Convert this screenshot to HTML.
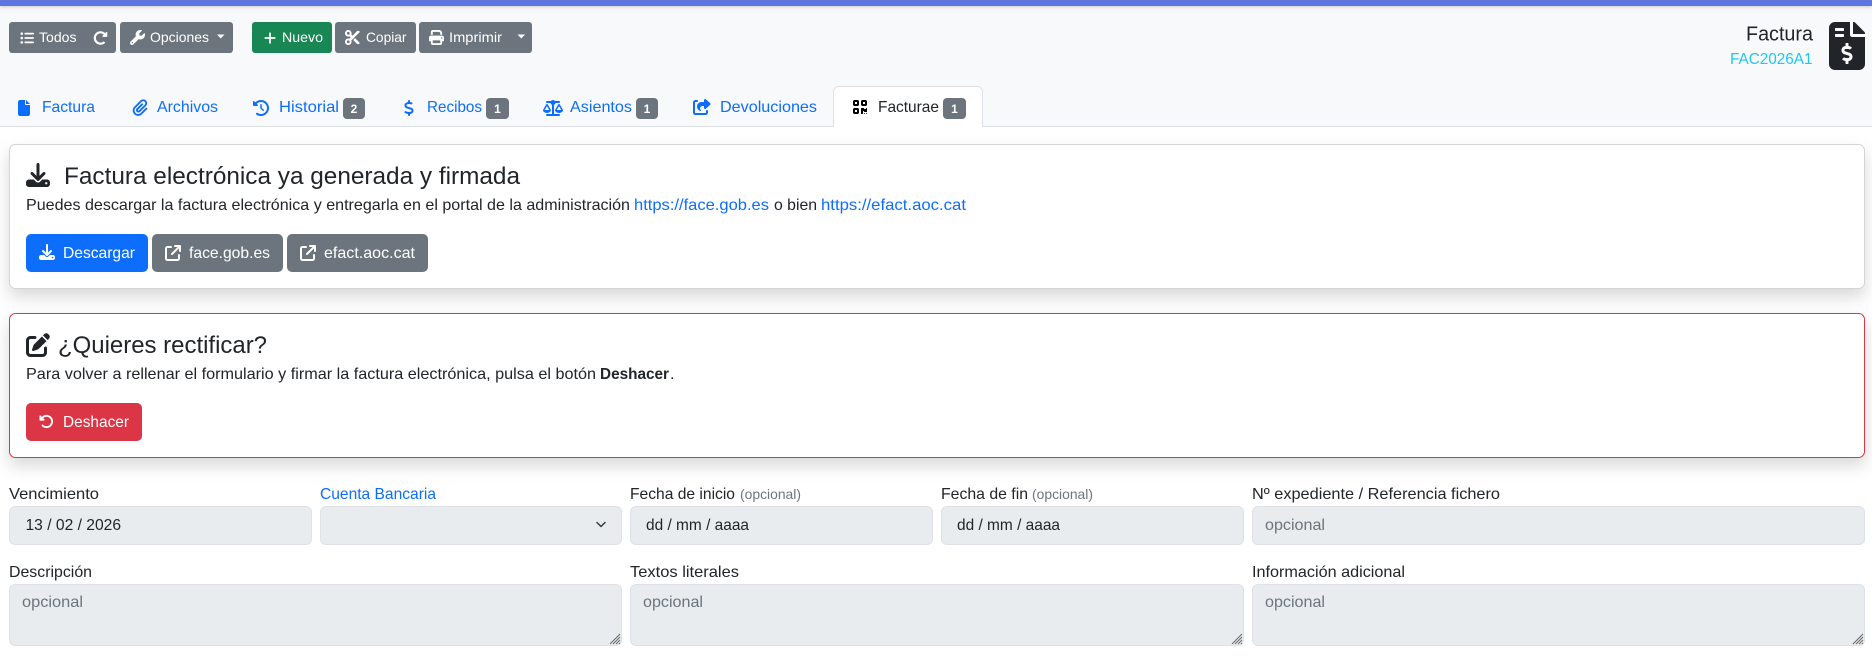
<!DOCTYPE html>
<html lang="es"><head><meta charset="utf-8"><title>Factura</title>
<style>
html,body{margin:0;padding:0;background:#fff;width:1872px;height:659px;overflow:hidden}
svg{display:block}
text{font-family:"Liberation Sans",sans-serif;font-size:16px;fill:#212529}
.w{fill:#fff;font-size:14px}
.b{fill:#fff;font-size:16px}
.l{fill:#0d6efd}
.bd{fill:#fff;font-size:12px;font-weight:bold;text-anchor:middle}
.o{fill:#6c757d;font-size:14px}
.p{fill:#6c757d}
.h{font-size:24px}
</style></head><body>
<svg width="1872" height="659" viewBox="0 0 1872 659" xmlns="http://www.w3.org/2000/svg">
<defs>
<filter id="s" x="-5%" y="-30%" width="110%" height="160%"><feDropShadow dx="0" dy="8" stdDeviation="8" flood-color="#000" flood-opacity=".15"/></filter>
<filter id="t" x="-1%" y="-100%" width="102%" height="400%"><feDropShadow dx="0" dy="1" stdDeviation="1.5" flood-color="#000" flood-opacity=".18"/></filter>
<symbol id="download" viewBox="0 0 512 512"><path d="M288 32c0-17.7-14.3-32-32-32s-32 14.3-32 32V274.7l-73.4-73.4c-12.5-12.5-32.8-12.5-45.3 0s-12.5 32.8 0 45.3l128 128c12.5 12.5 32.8 12.5 45.3 0l128-128c12.5-12.5 12.5-32.8 0-45.3s-32.8-12.5-45.3 0L288 274.7V32zM64 352c-35.3 0-64 28.7-64 64v32c0 35.3 28.7 64 64 64H448c35.3 0 64-28.7 64-64V416c0-35.3-28.7-64-64-64H346.5l-45.3 45.3c-25 25-65.5 25-90.5 0L165.5 352H64zm368 56a24 24 0 1 1 0 48 24 24 0 1 1 0-48z"/></symbol>
<symbol id="ext" viewBox="0 0 512 512"><path d="M320 0c-17.7 0-32 14.3-32 32s14.3 32 32 32h82.7L201.4 265.4c-12.5 12.5-12.5 32.8 0 45.3s32.8 12.5 45.3 0L448 109.3V192c0 17.7 14.3 32 32 32s32-14.3 32-32V32c0-17.7-14.3-32-32-32H320zM80 32C35.8 32 0 67.8 0 112V432c0 44.2 35.8 80 80 80H400c44.2 0 80-35.8 80-80V320c0-17.7-14.3-32-32-32s-32 14.3-32 32V432c0 8.8-7.2 16-16 16H80c-8.8 0-16-7.2-16-16V112c0-8.8 7.2-16 16-16H192c17.7 0 32-14.3 32-32s-14.3-32-32-32H80z"/></symbol>
</defs>

<!-- header -->
<rect x="0" y="0" width="1872" height="127" fill="#f8f9fa"/>
<rect x="0" y="0" width="1872" height="6" fill="#5f74e0" filter="url(#t)"/>
<rect x="0" y="126" width="1872" height="1" fill="#dee2e6"/>

<!-- toolbar -->
<g fill="#6c757d">
<rect x="9" y="22" width="107" height="31" rx="3.2"/>
<rect x="120" y="22" width="113" height="31" rx="3.2"/>
<rect x="335" y="22" width="81" height="31" rx="3.2"/>
<rect x="419" y="22" width="113" height="31" rx="3.2"/>
</g>
<rect x="252" y="22" width="80" height="31" rx="3.2" fill="#198754"/>
<g fill="#fff">
<svg x="20" y="31" width="14" height="14" viewBox="0 0 512 512"><path d="M64 144a48 48 0 1 0 0-96 48 48 0 1 0 0 96zM192 64c-17.7 0-32 14.3-32 32s14.3 32 32 32H480c17.7 0 32-14.3 32-32s-14.3-32-32-32H192zm0 160c-17.7 0-32 14.3-32 32s14.3 32 32 32H480c17.7 0 32-14.3 32-32s-14.3-32-32-32H192zm0 160c-17.7 0-32 14.3-32 32s14.3 32 32 32H480c17.7 0 32-14.3 32-32s-14.3-32-32-32H192zM64 464a48 48 0 1 0 0-96 48 48 0 1 0 0 96zm48-208a48 48 0 1 0 -96 0 48 48 0 1 0 96 0z"/></svg>
<svg x="93.5" y="31" width="14" height="14" viewBox="0 0 512 512"><path d="M256.455 8c66.269.119 126.437 26.233 170.859 68.685l35.715-35.715C478.149 25.851 504 36.559 504 57.941V192c0 13.255-10.745 24-24 24H345.941c-21.382 0-32.09-25.851-16.971-40.971l41.75-41.75c-30.864-28.899-70.801-44.907-113.23-45.273-92.398-.798-170.283 73.977-169.484 169.442C88.764 348.009 162.184 424 256 424c41.127 0 79.997-14.678 110.629-41.556 4.743-4.161 11.906-3.908 16.368.553l39.662 39.662c4.872 4.872 4.631 12.815-.482 17.433C378.202 479.813 319.926 504 256 504 119.034 504 8.001 392.967 8 256.002 7.999 119.193 119.646 7.755 256.455 8z"/></svg>
<svg x="130" y="30" width="15" height="15" viewBox="0 0 512 512"><path d="M352 320c88.4 0 160-71.6 160-160c0-15.3-2.2-30.1-6.2-44.2c-3.1-10.8-16.4-13.2-24.3-5.3l-76.8 76.8c-3 3-7.1 4.7-11.3 4.7H336c-8.8 0-16-7.2-16-16V118.6c0-4.2 1.7-8.3 4.7-11.3l76.8-76.8c7.9-7.9 5.4-21.2-5.3-24.3C382.1 2.2 367.3 0 352 0C263.6 0 192 71.6 192 160c0 19.1 3.4 37.5 9.5 54.5L19.9 396.1C7.2 408.8 0 426.1 0 444.1C0 481.6 30.4 512 67.9 512c18 0 35.3-7.2 48-19.9L297.5 310.5c17 6.2 35.4 9.5 54.5 9.5zM80 408a24 24 0 1 1 0 48 24 24 0 1 1 0-48z"/></svg>
<path d="M217 34.5h7.5l-3.75 4z"/>
<svg x="264" y="31" width="12" height="14" viewBox="0 0 448 512" preserveAspectRatio="none"><path d="M256 80c0-17.7-14.3-32-32-32s-32 14.3-32 32V224H48c-17.7 0-32 14.3-32 32s14.3 32 32 32H192V432c0 17.7 14.3 32 32 32s32-14.3 32-32V288H400c17.7 0 32-14.3 32-32s-14.3-32-32-32H256V80z"/></svg>
<svg x="345" y="30" width="15" height="15" viewBox="0 0 512 512"><path d="M256 192l-39.5-39.5c4.9-12.6 7.5-26.2 7.5-40.5C224 50.1 173.9 0 112 0S0 50.1 0 112s50.1 112 112 112c14.3 0 27.9-2.7 40.5-7.5L192 256l-39.5 39.5c-12.6-4.9-26.2-7.5-40.5-7.5C50.1 288 0 338.1 0 400s50.1 112 112 112s112-50.1 112-112c0-14.3-2.7-27.9-7.5-40.5L499.2 76.8c7.1-7.1 7.1-18.5 0-25.6c-28.3-28.3-74.1-28.3-102.4 0L256 192zm22.6 150.6L396.8 460.8c28.3 28.3 74.1 28.3 102.4 0c7.1-7.1 7.1-18.5 0-25.6L342.6 278.6l-64 64zM64 112a48 48 0 1 1 96 0 48 48 0 1 1 -96 0zm48 240a48 48 0 1 1 0 96 48 48 0 1 1 0-96z"/></svg>
<svg x="429" y="30" width="15" height="15" viewBox="0 0 512 512"><path d="M128 0C92.7 0 64 28.7 64 64v96h64V64H354.7L384 93.3V160h64V93.3c0-17-6.7-33.3-18.7-45.3L400 18.7C388 6.7 371.7 0 354.7 0H128zM384 352v32 64H128V384 368 352H384zm64 32h32c17.7 0 32-14.3 32-32V256c0-35.3-28.7-64-64-64H64c-35.3 0-64 28.7-64 64v96c0 17.7 14.3 32 32 32H64v64c0 35.3 28.7 64 64 64H384c35.3 0 64-28.7 64-64V384zM432 248a24 24 0 1 1 0 48 24 24 0 1 1 0-48z"/></svg>
<path d="M517.5 34.5h7.5l-3.75 4z"/>
</g>
<text class="w" x="39" y="42" textLength="37.5" lengthAdjust="spacingAndGlyphs">Todos</text>
<text class="w" x="150" y="42" textLength="59" lengthAdjust="spacingAndGlyphs">Opciones</text>
<text class="w" x="282" y="42" textLength="41" lengthAdjust="spacingAndGlyphs">Nuevo</text>
<text class="w" x="366" y="42" textLength="40.5" lengthAdjust="spacingAndGlyphs">Copiar</text>
<text class="w" x="449" y="42" textLength="53" lengthAdjust="spacingAndGlyphs">Imprimir</text>

<!-- top-right -->
<text x="1746" y="40.5" style="font-size:20px" textLength="67" lengthAdjust="spacingAndGlyphs">Factura</text>
<text x="1730" y="64" style="font-size:16px;fill:#1ec8f0" textLength="82.5" lengthAdjust="spacingAndGlyphs">FAC2026A1</text>
<svg x="1829" y="22" width="36" height="48" viewBox="0 0 384 512" fill="#212529"><path d="M377 105L279.1 7c-4.5-4.5-10.6-7-17-7H256v128h128v-6.1c0-6.3-2.5-12.4-7-16.9zm-153 31V0H64C28.7 0 0 28.7 0 64V448c0 35.3 28.7 64 64 64H320c35.3 0 64-28.7 64-64V160H248c-13.2 0-24-10.8-24-24zM64 72c0-4.42 3.58-8 8-8h80c4.42 0 8 3.58 8 8v16c0 4.42-3.58 8-8 8H72c-4.42 0-8-3.58-8-8V72zm0 80v-16c0-4.42 3.58-8 8-8h80c4.42 0 8 3.58 8 8v16c0 4.42-3.58 8-8 8H72c-4.42 0-8-3.58-8-8zm144 263.88V440c0 4.42-3.58 8-8 8h-16c-4.42 0-8-3.58-8-8v-24.29c-11.29-.58-22.27-4.52-31.37-11.35-3.9-2.93-4.1-8.77-.57-12.14l11.75-11.21c2.77-2.64 6.89-2.76 10.13-.73 3.87 2.42 8.26 3.72 12.82 3.72h28.11c6.5 0 11.8-5.92 11.8-13.19 0-5.95-3.61-11.19-8.77-12.73l-45-13.5c-18.59-5.58-31.58-23.42-31.58-43.39 0-24.52 19.05-44.44 42.67-45.07V232c0-4.42 3.58-8 8-8h16c4.42 0 8 3.58 8 8v24.29c11.29.58 22.27 4.51 31.37 11.35 3.9 2.93 4.1 8.77.57 12.14l-11.75 11.21c-2.77 2.64-6.89 2.76-10.13.73-3.87-2.43-8.26-3.72-12.82-3.72h-28.11c-6.5 0-11.8 5.92-11.8 13.19 0 5.95 3.61 11.19 8.77 12.73l45 13.5c18.59 5.58 31.58 23.42 31.58 43.39 0 24.53-19.05 44.44-42.67 45.07z"/></svg>

<!-- tabs -->
<path d="M833.5 127V92a5.5 5.5 0 0 1 5.5-5.5H977a5.5 5.5 0 0 1 5.5 5.5V127" fill="#fff" stroke="#dee2e6"/>
<rect x="834" y="126" width="148" height="1" fill="#fff"/>
<g fill="#0d6efd">
<svg x="18" y="100" width="12" height="16" viewBox="0 0 384 512"><path d="M0 64C0 28.7 28.7 0 64 0H224V128c0 17.7 14.3 32 32 32H384V448c0 35.3-28.7 64-64 64H64c-35.3 0-64-28.7-64-64V64zm384 64H256V0L384 128z"/></svg>
<svg x="132" y="99" width="16" height="17" viewBox="0 0 448 512"><path d="M364.2 83.8c-24.4-24.4-64-24.4-88.4 0l-184 184c-42.1 42.1-42.1 110.3 0 152.4s110.3 42.1 152.4 0l152-152c10.9-10.9 28.7-10.9 39.6 0s10.9 28.7 0 39.6l-152 152c-64 64-167.6 64-231.6 0s-64-167.6 0-231.6l184-184c46.3-46.3 121.3-46.3 167.6 0s46.3 121.3 0 167.6l-176 176c-28.6 28.6-75 28.6-103.6 0s-28.6-75 0-103.6l144-144c10.9-10.9 28.7-10.9 39.6 0s10.9 28.7 0 39.6l-144 144c-6.7 6.7-6.7 17.7 0 24.4s17.7 6.7 24.4 0l176-176c24.4-24.4 24.4-64 0-88.4z"/></svg>
<svg x="253" y="100" width="16" height="16" viewBox="0 0 512 512"><path d="M75 75L41 41C25.9 25.9 0 36.6 0 57.9V168c0 13.3 10.7 24 24 24H134.1c21.4 0 32.1-25.9 17-41l-30.8-30.8C155 85.5 203 64 256 64c106 0 192 86 192 192s-86 192-192 192c-40.8 0-78.6-12.7-109.7-34.4c-14.5-10.1-34.4-6.6-44.6 7.9s-6.6 34.4 7.9 44.6C151.2 495 201.7 512 256 512c141.4 0 256-114.6 256-256S397.4 0 256 0C185.3 0 121.3 28.7 75 75zm181 53c-13.3 0-24 10.7-24 24V256c0 6.4 2.5 12.5 7 17l72 72c9.4 9.4 24.6 9.4 33.9 0s9.4-24.6 0-33.9l-65-65V152c0-13.3-10.7-24-24-24z"/></svg>
<svg x="404" y="100" width="10" height="16" viewBox="0 0 320 512"><path d="M160 0c17.7 0 32 14.3 32 32V67.7c1.6 .2 3.1 .4 4.7 .7c.4 .1 .7 .1 1.1 .2l48 8.8c17.4 3.2 28.9 19.9 25.7 37.2s-19.9 28.9-37.2 25.7l-47.5-8.7c-31.3-4.6-58.9-1.5-78.3 6.2s-27.2 18.3-29 28.1c-2 10.7-.5 16.7 1.2 20.4c1.8 3.9 5.5 8.3 12.8 13.2c16.3 10.7 41.3 17.7 73.7 26.3l2.9 .8c28.6 7.6 63.6 16.8 89.6 33.8c14.2 9.3 27.6 21.9 35.9 39.5c8.5 17.9 10.3 37.9 6.4 59.2c-6.9 38-33.1 63.4-65.6 76.7c-13.7 5.6-28.6 9.2-44.4 11V480c0 17.7-14.3 32-32 32s-32-14.3-32-32V445.1c-.4-.1-.9-.1-1.3-.2l-.2 0 0 0c-24.4-3.8-64.5-14.3-91.5-26.3c-16.1-7.2-23.4-26.1-16.2-42.2s26.1-23.4 42.2-16.2c20.9 9.3 55.3 18.5 75.2 21.6c31.9 4.7 58.2 2 76-5.3c16.9-6.9 24.6-16.9 26.8-28.9c1.9-10.6 .4-16.7-1.3-20.4c-1.9-4-5.6-8.4-13-13.3c-16.4-10.7-41.5-17.7-74-26.3l-2.8-.7 0 0C119.4 279.3 84.4 270 58.4 253c-14.2-9.3-27.5-22-35.8-39.6c-8.4-17.9-10.1-37.9-6.1-59.2C23.7 116 52.3 91.2 84.8 78.3c13.3-5.3 27.9-8.9 43.2-11V32c0-17.7 14.3-32 32-32z"/></svg>
<svg x="543" y="100" width="20" height="16" viewBox="0 0 640 512"><path d="M384 32H512c17.7 0 32 14.3 32 32s-14.3 32-32 32H398.4c-5.2 25.8-22.9 47.1-46.4 57.3V448H512c17.7 0 32 14.3 32 32s-14.3 32-32 32H320 128c-17.7 0-32-14.3-32-32s14.3-32 32-32H288V153.3c-23.5-10.3-41.2-31.6-46.4-57.3H128c-17.7 0-32-14.3-32-32s14.3-32 32-32H256c14.6-19.4 37.8-32 64-32s49.4 12.6 64 32zm55.6 288H584.4L512 195.8 439.6 320zM512 416c-62.9 0-115.2-34-126-78.9c-2.6-11 1-22.3 6.7-32.1l95.2-163.2c5-8.6 14.2-13.8 24.1-13.8s19.1 5.3 24.1 13.8l95.2 163.2c5.7 9.8 9.3 21.1 6.7 32.1C627.2 382 574.9 416 512 416zM126.8 195.8L54.4 320H199.3L126.8 195.8zM.9 337.1c-2.6-11 1-22.3 6.7-32.1l95.2-163.2c5-8.6 14.2-13.8 24.1-13.8s19.1 5.3 24.1 13.8l95.2 163.2c5.7 9.8 9.3 21.1 6.7 32.1C242 382 189.7 416 126.8 416S11.7 382 .9 337.1z"/></svg>
<svg x="693" y="99" width="18" height="16" viewBox="0 0 576 512"><path d="M352 224H305.5c-45 0-81.5 36.5-81.5 81.5c0 22.3 10.3 34.3 19.2 40.5c6.8 4.7 12.8 12 12.8 20.3c0 9.8-8 17.8-17.8 17.8h-2.5c-2.4 0-4.8-.4-7.1-1.4C210.8 374.8 128 333.4 128 240c0-79.5 64.5-144 144-144h80V34.7C352 15.5 367.5 0 386.7 0c8.6 0 16.8 3.2 23.2 8.9L548.1 133.3c7.6 6.8 11.9 16.5 11.9 26.7s-4.3 19.9-11.9 26.7l-139 125.1c-5.9 5.3-13.5 8.2-21.4 8.2H384c-17.7 0-32-14.3-32-32V224zM80 96c-8.8 0-16 7.2-16 16V432c0 8.8 7.2 16 16 16H400c8.8 0 16-7.2 16-16V384c0-17.7 14.3-32 32-32s32 14.3 32 32v48c0 44.2-35.8 80-80 80H80c-44.2 0-80-35.8-80-80V112C0 67.8 35.8 32 80 32h48c17.7 0 32 14.3 32 32s-14.3 32-32 32H80z"/></svg>
</g>
<svg x="853" y="99" width="14" height="16" viewBox="0 0 448 512" fill="#000"><path d="M0 80C0 53.5 21.5 32 48 32h96c26.5 0 48 21.5 48 48v96c0 26.5-21.5 48-48 48H48c-26.5 0-48-21.5-48-48V80zM64 96v64h64V96H64zM0 336c0-26.5 21.5-48 48-48h96c26.5 0 48 21.5 48 48v96c0 26.5-21.5 48-48 48H48c-26.5 0-48-21.5-48-48V336zm64 16v64h64V352H64zM304 32h96c26.5 0 48 21.5 48 48v96c0 26.5-21.5 48-48 48H304c-26.5 0-48-21.5-48-48V80c0-26.5 21.5-48 48-48zm80 64H320v64h64V96zM256 304c0-8.8 7.2-16 16-16h64c8.8 0 16 7.2 16 16s7.2 16 16 16h32c8.8 0 16-7.2 16-16s7.2-16 16-16s16 7.2 16 16v96c0 8.8-7.2 16-16 16H368c-8.8 0-16-7.2-16-16s-7.2-16-16-16s-16 7.2-16 16v64c0 8.8-7.2 16-16 16H272c-8.8 0-16-7.2-16-16V304zM368 480a16 16 0 1 1 0-32 16 16 0 1 1 0 32zm64 0a16 16 0 1 1 0-32 16 16 0 1 1 0 32z"/></svg>
<text class="l" x="42" y="112" textLength="53" lengthAdjust="spacingAndGlyphs">Factura</text>
<text class="l" x="157" y="112" textLength="61" lengthAdjust="spacingAndGlyphs">Archivos</text>
<text class="l" x="279" y="112" textLength="60" lengthAdjust="spacingAndGlyphs">Historial</text>
<text class="l" x="427" y="112" textLength="55" lengthAdjust="spacingAndGlyphs">Recibos</text>
<text class="l" x="570" y="112" textLength="62" lengthAdjust="spacingAndGlyphs">Asientos</text>
<text class="l" x="720" y="112" textLength="97" lengthAdjust="spacingAndGlyphs">Devoluciones</text>
<text x="878" y="112" textLength="61" lengthAdjust="spacingAndGlyphs">Facturae</text>
<g fill="#6c757d">
<rect x="343" y="98" width="22" height="21" rx="4"/>
<rect x="486" y="98" width="23" height="21" rx="4"/>
<rect x="636" y="98" width="22" height="21" rx="4"/>
<rect x="943" y="98" width="23" height="21" rx="4"/>
</g>
<text class="bd" x="354" y="113">2</text>
<text class="bd" x="497.5" y="113">1</text>
<text class="bd" x="647" y="113">1</text>
<text class="bd" x="954.5" y="113">1</text>

<!-- card 1 -->
<rect x="9.5" y="144.5" width="1855" height="144" rx="6" fill="#fff" stroke="#d4d4d4" filter="url(#s)"/>
<svg x="26" y="163" width="24" height="24" viewBox="0 0 512 512" fill="#212529"><use href="#download"/></svg>
<text class="h" x="64" y="184" textLength="456" lengthAdjust="spacingAndGlyphs">Factura electrónica ya generada y firmada</text>
<text x="26" y="210" textLength="604" lengthAdjust="spacingAndGlyphs">Puedes descargar la factura electrónica y entregarla en el portal de la administración</text>
<text class="l" x="634" y="210" textLength="135" lengthAdjust="spacingAndGlyphs">https://face.gob.es</text>
<text x="774" y="210" textLength="43" lengthAdjust="spacingAndGlyphs">o bien</text>
<text class="l" x="821" y="210" textLength="145" lengthAdjust="spacingAndGlyphs">https://efact.aoc.cat</text>
<rect x="26" y="234" width="122" height="38" rx="5" fill="#0d6efd"/>
<rect x="152" y="234" width="131" height="38" rx="5" fill="#6c757d"/>
<rect x="287" y="234" width="141" height="38" rx="5" fill="#6c757d"/>
<g fill="#fff">
<svg x="39" y="244" width="16" height="16" viewBox="0 0 512 512"><use href="#download"/></svg>
<svg x="165" y="245" width="16" height="16" viewBox="0 0 512 512"><use href="#ext"/></svg>
<svg x="300" y="245" width="16" height="16" viewBox="0 0 512 512"><use href="#ext"/></svg>
</g>
<text class="b" x="63" y="258" textLength="72" lengthAdjust="spacingAndGlyphs">Descargar</text>
<text class="b" x="189" y="258" textLength="81" lengthAdjust="spacingAndGlyphs">face.gob.es</text>
<text class="b" x="324" y="258" textLength="91" lengthAdjust="spacingAndGlyphs">efact.aoc.cat</text>

<!-- card 2 -->
<rect x="9.5" y="313.5" width="1855" height="144" rx="6" fill="#fff" stroke="#dc3545" filter="url(#s)"/>
<svg x="26" y="333" width="24" height="24" viewBox="0 0 512 512" fill="#212529"><path d="M471.6 21.7c-21.9-21.9-57.3-21.9-79.2 0L362.3 51.7l97.9 97.9 30.1-30.1c21.9-21.9 21.9-57.3 0-79.2L471.6 21.7zm-299.2 220c-6.1 6.1-10.8 13.6-13.5 21.9l-29.6 88.8c-2.9 8.6-.6 18.1 5.8 24.6s15.9 8.7 24.6 5.8l88.8-29.6c8.2-2.7 15.7-7.4 21.9-13.5L437.7 172.3 339.7 74.3 172.4 241.7zM96 64C43 64 0 107 0 160V416c0 53 43 96 96 96H352c53 0 96-43 96-96V320c0-17.7-14.3-32-32-32s-32 14.3-32 32v96c0 17.7-14.3 32-32 32H96c-17.7 0-32-14.3-32-32V160c0-17.7 14.3-32 32-32h96c17.7 0 32-14.3 32-32s-14.3-32-32-32H96z"/></svg>
<text class="h" x="58" y="353" textLength="209" lengthAdjust="spacingAndGlyphs">¿Quieres rectificar?</text>
<text x="26" y="379" textLength="570" lengthAdjust="spacingAndGlyphs">Para volver a rellenar el formulario y firmar la factura electrónica, pulsa el botón</text>
<text x="600" y="379" style="font-weight:bold" textLength="69" lengthAdjust="spacingAndGlyphs">Deshacer</text>
<text x="670" y="379">.</text>
<rect x="26" y="403" width="116" height="38" rx="5" fill="#dc3545"/>
<svg x="39" y="414" width="15" height="15" viewBox="0 0 512 512" fill="#fff"><g transform="matrix(-1 0 0 1 512 0)"><path d="M463.5 224H472c13.3 0 24-10.7 24-24V72c0-9.7-5.8-18.5-14.8-22.2s-19.3-1.7-26.2 5.2L413.4 96.6c-87.6-86.5-228.7-86.2-315.8 1c-87.5 87.5-87.5 229.3 0 316.8s229.3 87.5 316.8 0c12.5-12.5 12.5-32.8 0-45.3s-32.8-12.5-45.3 0c-62.5 62.5-163.8 62.5-226.3 0s-62.5-163.8 0-226.3c62.2-62.2 162.7-62.5 225.3-1L327 183c-6.9 6.9-8.9 17.2-5.2 26.2s12.5 14.8 22.2 14.8H463.5z"/></g></svg>
<text class="b" x="63" y="427" textLength="66" lengthAdjust="spacingAndGlyphs">Deshacer</text>

<!-- form labels -->
<text x="9" y="499" textLength="90" lengthAdjust="spacingAndGlyphs">Vencimiento</text>
<text class="l" x="320" y="499" textLength="116" lengthAdjust="spacingAndGlyphs">Cuenta Bancaria</text>
<text x="630" y="499" textLength="105" lengthAdjust="spacingAndGlyphs">Fecha de inicio</text>
<text class="o" x="740" y="499" textLength="61" lengthAdjust="spacingAndGlyphs">(opcional)</text>
<text x="941" y="499" textLength="87" lengthAdjust="spacingAndGlyphs">Fecha de fin</text>
<text class="o" x="1032" y="499" textLength="61" lengthAdjust="spacingAndGlyphs">(opcional)</text>
<text x="1252" y="499" textLength="248" lengthAdjust="spacingAndGlyphs">Nº expediente / Referencia fichero</text>
<text x="9" y="577" textLength="83" lengthAdjust="spacingAndGlyphs">Descripción</text>
<text x="630" y="577" textLength="109" lengthAdjust="spacingAndGlyphs">Textos literales</text>
<text x="1252" y="577" textLength="153" lengthAdjust="spacingAndGlyphs">Información adicional</text>

<!-- form controls -->
<g fill="#e9ecef" stroke="#dee2e6">
<rect x="9.5" y="506.5" width="302" height="38" rx="5.5"/>
<rect x="320.5" y="506.5" width="301" height="38" rx="5.5"/>
<rect x="630.5" y="506.5" width="302" height="38" rx="5.5"/>
<rect x="941.5" y="506.5" width="302" height="38" rx="5.5"/>
<rect x="1252.5" y="506.5" width="612" height="38" rx="5.5"/>
<rect x="9.5" y="584.5" width="612" height="61" rx="5.5"/>
<rect x="630.5" y="584.5" width="613" height="61" rx="5.5"/>
<rect x="1252.5" y="584.5" width="612" height="61" rx="5.5"/>
</g>
<path d="M597 522.5l4 4 4-4" fill="none" stroke="#343a40" stroke-width="1.5" stroke-linecap="round" stroke-linejoin="round"/>
<text x="25.5" y="530" textLength="95.5" lengthAdjust="spacingAndGlyphs">13 / 02 / 2026</text>
<text x="646" y="530" textLength="103" lengthAdjust="spacingAndGlyphs">dd / mm / aaaa</text>
<text x="957" y="530" textLength="103" lengthAdjust="spacingAndGlyphs">dd / mm / aaaa</text>
<text class="p" x="1265" y="530" textLength="60" lengthAdjust="spacingAndGlyphs">opcional</text>
<text class="p" x="22" y="607" textLength="61" lengthAdjust="spacingAndGlyphs">opcional</text>
<text class="p" x="643" y="607" textLength="60" lengthAdjust="spacingAndGlyphs">opcional</text>
<text class="p" x="1265" y="607" textLength="60" lengthAdjust="spacingAndGlyphs">opcional</text>
<g stroke="#666" stroke-width="1" fill="none">
<path d="M610 644l10-10M613 644l7-7M616 644l4-4M619 644l1-1"/>
<path d="M1232 644l10-10M1235 644l7-7M1238 644l4-4M1241 644l1-1"/>
<path d="M1853 644l10-10M1856 644l7-7M1859 644l4-4M1862 644l1-1"/>
</g>
</svg>
</body></html>
